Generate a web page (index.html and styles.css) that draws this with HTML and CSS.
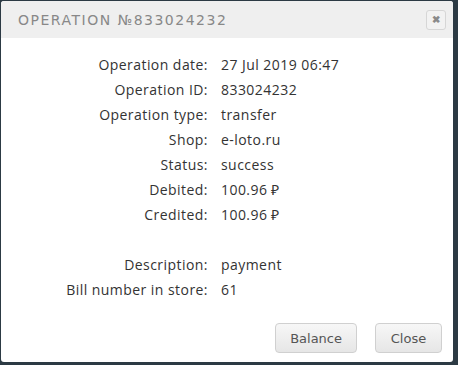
FILE: index.html
```html
<!DOCTYPE html>
<html lang="en">
<head>
    <meta charset="UTF-8">
    <title>Operation</title>
    <link rel="stylesheet" href="styles.css">
</head>
<body>
    <div class="dialog">
        <div class="dialog-head">
            <h1>Operation №833024232</h1>
            <button class="x-btn" type="button">&#10006;</button>
        </div>
        <div class="dialog-body">
            <div class="row"><span class="label">Operation date:</span><span class="value">27 Jul 2019 06:47</span></div>
            <div class="row"><span class="label">Operation ID:</span><span class="value">833024232</span></div>
            <div class="row"><span class="label">Operation type:</span><span class="value">transfer</span></div>
            <div class="row"><span class="label">Shop:</span><span class="value">e-loto.ru</span></div>
            <div class="row"><span class="label">Status:</span><span class="value">success</span></div>
            <div class="row"><span class="label">Debited:</span><span class="value">100.96 ₽</span></div>
            <div class="row"><span class="label">Credited:</span><span class="value">100.96 ₽</span></div>
            <div class="row spacer"></div>
            <div class="row"><span class="label">Description:</span><span class="value">payment</span></div>
            <div class="row"><span class="label">Bill number in store:</span><span class="value">61</span></div>
        </div>
        <div class="dialog-foot">
            <button class="btn" type="button">Balance</button>
            <button class="btn" type="button">Close</button>
        </div>
    </div>
</body>
</html>
```
FILE: styles.css
```css
body {
    margin: 0;
    background: #2c3a44;
    font-family: "Open Sans", "Liberation Sans", sans-serif;
    height: 365px;
    overflow: hidden;
}

.dialog {
    margin: 1px 0 0 1px;
    width: 452px;
    height: 361px;
    background: #fff;
    border-radius: 3px;
    display: flex;
    flex-direction: column;
    overflow: hidden;
}

.dialog-head {
    height: 37px;
    background: #efefef;
    display: flex;
    align-items: center;
    justify-content: space-between;
    padding: 0 7px 0 17px;
}

.dialog-head h1 {
    margin: 0;
    font-family: "DejaVu Sans", sans-serif;
    font-size: 14px;
    font-weight: normal;
    text-transform: uppercase;
    letter-spacing: 1.5px;
    color: #888;
}

.x-btn {
    width: 20px;
    height: 20px;
    padding: 0;
    margin-top: 1px;
    border: 1px solid #d6d6d6;
    border-radius: 3px;
    background: #f2f2f2;
    color: #8a8a8a;
    font-size: 10px;
    line-height: 18px;
    font-weight: bold;
}

.dialog-body {
    padding-top: 14px;
    flex: 1;
}

.row {
    display: flex;
    height: 25px;
    align-items: center;
    font-size: 14px;
    letter-spacing: 0.45px;
    color: #333;
}

.label {
    width: 207px;
    text-align: right;
}

.value {
    margin-left: 13px;
}

.dialog-foot {
    display: flex;
    justify-content: flex-end;
    gap: 18px;
    padding: 0 11px 9px 0;
}

.btn {
    box-sizing: border-box;
    min-width: 67px;
    height: 30px;
    padding: 0 14px;
    font-family: "DejaVu Sans", sans-serif;
    font-size: 13px;
    color: #555;
    border: 1px solid #d0d0d0;
    border-radius: 4px;
    background: linear-gradient(#f7f7f7, #e6e6e6);
}
```
